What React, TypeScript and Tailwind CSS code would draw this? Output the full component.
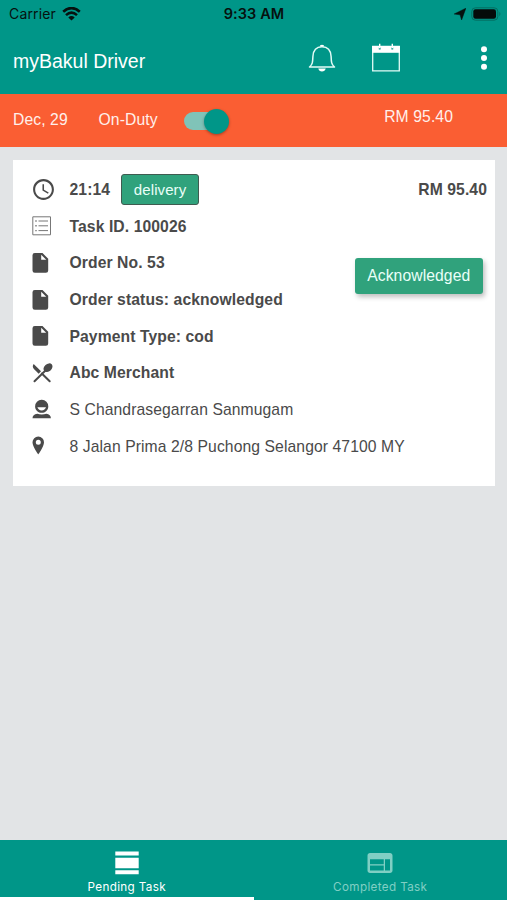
import type { ReactNode } from "react";
import { MdAccessTime, MdWeb } from "react-icons/md";

interface TaskRowProps {
  icon: ReactNode;
  children: ReactNode;
  light?: boolean;
}

const TaskRow = ({ icon, children, light }: TaskRowProps) => (
  <div className="flex h-[36.65px] items-center">
    <div className="flex w-[38px] shrink-0 items-center">{icon}</div>
    <div className={light ? "flex items-center whitespace-nowrap" : "flex items-center whitespace-nowrap font-bold"}>
      {children}
    </div>
  </div>
);

const WifiIcon = () => (
  <svg className="ml-[6px] h-[14px] w-[19px]" viewBox="0 0 19 14" fill="none" stroke="#06110f" strokeWidth="2.6">
    <path d="M1.2 4.7Q9.5 -2.6 17.8 4.7" />
    <path d="M4 8.1Q9.5 3.2 15 8.1" />
    <path d="M6.3 10.4Q9.5 7.8 12.7 10.4L9.5 13.5Z" fill="#06110f" stroke="none" />
  </svg>
);

const BellIcon = () => (
  <svg className="h-[28px] w-[28px]" viewBox="0 0 28 28" fill="none">
    <path d="M1.5 23C4.6 20.400 4.700 18 4.900 12.500C5.200 6.500 8 2.700 14 2.700S22.800 6.500 23.100 12.500C23.300 18 23.400 20.400 26.500 23Z" stroke="#e2fbf6" strokeWidth="1.5" strokeLinejoin="round" />
    <path d="M11.7 2.600a2.300 1.800 0 0 1 4.600 0Z" fill="white" />
    <path d="M10.300 24.600h7.400c-.4 2-1.800 3-3.700 3s-3.300-1-3.700-3Z" fill="white" />
  </svg>
);

const CalendarIcon = () => (
  <svg className="h-[29px] w-[30px]" viewBox="0 0 30 29" fill="none">
    <path d="M1.7 3.500h26.600v24.300H1.700Z" stroke="#e2fbf6" strokeWidth="1.300" />
    <path d="M1.1 3h27.800v6.800H1.100Z" fill="white" />
    <path d="M8.700 4.500v2M21.300 4.500v2" stroke="#009688" strokeWidth="1.800" />
    <path d="M8.700.7v4.500M21.300.7v4.500" stroke="white" strokeWidth="1.400" />
  </svg>
);

const ListIcon = () => (
  <svg className="h-[20px] w-[20px]" viewBox="0 0 20 20" fill="none" stroke="#777">
    <path d="M.8.800h17.700v18H.8Z" />
    <path d="M6.500 5h9.500M6.500 9.800h9.500M6.500 14.600h9.500" />
    <path d="M3.300 5h1.400M3.300 9.800h1.400M3.300 14.600h1.400" strokeWidth="1.400" />
  </svg>
);

const DocumentIcon = () => (
  <svg className="h-[20px] w-[17px]" viewBox="0 0 17 20">
    <path d="M2.800 0h7.700L16.200 5.800v11.700a2.300 2.300 0 0 1-2.300 2.300H2.800A2.300 2.300 0 0 1 .5 17.500V2.300A2.300 2.300 0 0 1 2.800 0Z" fill="#4a4a4a" />
    <path d="M9.200 1.800v5h5Z" fill="white" />
  </svg>
);

const CutleryIcon = () => (
  <svg className="h-[20px] w-[21px]" viewBox="0 0 21 20">
    <path d="M2.500 18.300 14 7M17.700 18.300 9.800 10.500" stroke="#4a4a4a" strokeWidth="2" strokeLinecap="round" />
    <path d="M1.700 1 9 8.300 6.700 10.700 2.200 6.300C.4 4.500.4 2.700 1.700 1Z" fill="#4a4a4a" />
    <ellipse cx="16" cy="4.700" rx="5" ry="3.700" transform="rotate(-42 16 4.700)" fill="#4a4a4a" />
  </svg>
);

const PersonIcon = () => (
  <svg className="-mt-px h-[20px] w-[19px]" viewBox="0 0 19 20" fill="#4a4a4a">
    <path fillRule="evenodd" d="M9.700.8a6.500 6.400 0 0 1 6.600 6.600c0 3.500-3 6.400-6.600 6.400S3.100 10.900 3.100 7.400A6.500 6.400 0 0 1 9.700.8ZM5.400 8.300c.6 1.900 2.200 3.200 4.300 3.200s3.700-1.300 4.300-3.200Z" />
    <path d="M.5 19.300c.1-2.700 1.600-4 4.800-4.600 2.400 1.100 6.500 1.100 8.900 0 3.200.6 4.600 1.900 4.700 4.600Z" />
  </svg>
);

const PinIcon = () => (
  <svg className="-mt-px h-[19px] w-[13px]" viewBox="0 0 13 19">
    <path fillRule="evenodd" d="M6.300.5A5.800 5.800 0 0 0 .5 6.300C.5 10.500 6.300 18.500 6.300 18.500S12 10.500 12 6.300A5.800 5.800 0 0 0 6.300.5Zm0 3.200a2.500 2.500 0 1 1 0 5 2.500 2.500 0 0 1 0-5Z" fill="#4a4a4a" />
  </svg>
);

const StatusBar = () => (
  <div className="grid h-[27px] grid-cols-3 items-center pl-[9px] pr-[6px] font-['Inter',sans-serif] text-[#06110f]">
    <div className="flex items-center">
      <span className="text-[14px] tracking-[0.15px]">Carrier</span>
      <WifiIcon />
    </div>
    <span className="-ml-[2px] text-center text-[14.5px] font-semibold tracking-[0.1px]">9:33 AM</span>
    <div className="flex items-center justify-end gap-[5px]">
      <svg className="h-[12px] w-[12px]" viewBox="0 0 12 12">
        <path d="M11.900.2 7.600 11.900 6.100 6.800.2 6Z" fill="#06110f" stroke="#06110f" strokeWidth=".5" />
      </svg>
      <svg className="h-[14px] w-[30px]" viewBox="0 0 30 14">
        <rect x=".8" y=".8" width="26" height="12.400" rx="3.600" fill="none" stroke="#046e62" />
        <rect x="2.300" y="2.300" width="22.700" height="9.400" rx="2.200" fill="#050b0a" />
        <path d="M28.400 4.800q2 2.200 0 4.400Z" fill="#046e62" />
      </svg>
    </div>
  </div>
);

const Header = () => (
  <header className="h-[94px] bg-[#009688]">
    <StatusBar />
    <div className="flex h-[67px] items-start justify-between pl-[13px] pr-[19px] text-white">
      <h1 className="pt-[21px] text-[19.5px] leading-[27px]">myBakul Driver</h1>
      <div className="flex items-center pt-[16px]">
        <BellIcon />
        <div className="ml-[35px]">
          <CalendarIcon />
        </div>
        <svg className="ml-[79px] h-[26px] w-[8px]" viewBox="0 0 8 26" fill="white">
          <circle cx="4" cy="4.300" r="3" />
          <circle cx="4" cy="13" r="3" />
          <circle cx="4" cy="21.700" r="3" />
        </svg>
      </div>
    </div>
  </header>
);

const DutyBar = () => (
  <div className="flex h-[53px] items-start bg-[#fa5e33] pl-[13px] pr-[54px] pt-[13px] text-[15.7px] leading-[24px] text-[#fff0eb]">
    <span className="mt-px w-[85.5px] tracking-[0.1px]">Dec, 29</span>
    <span className="mt-px w-[85.5px] tracking-[0.1px]">On-Duty</span>
    <div className="mt-[5px] flex h-[18px] w-[43px] items-center justify-end rounded-full bg-[#80c3b8]">
      <div className="-mr-[2px] h-[25px] w-[25px] shrink-0 rounded-full bg-[#009688] shadow-[0_1px_3px_rgba(0,0,0,0.35)]" />
    </div>
    <span className="-mt-[2px] ml-auto tracking-[0.1px]">RM 95.40</span>
  </div>
);

const TaskCard = () => (
  <section className="relative mx-[13px] mr-[12px] mt-[13px] h-[326px] bg-white pl-[18.5px] pt-[11.5px] text-[15.7px] tracking-[0.09px] text-[#4a4a4a]">
    <div className="flex items-center justify-between pr-[8px]">
      <TaskRow icon={<MdAccessTime className="-ml-px -mt-px h-[25px] w-[25px]" />}>
        <span>21:14</span>
        <span className="ml-[11px] flex h-[31px] w-[78px] items-center justify-center rounded-[3px] border border-[#3f5b50] bg-[#30a27c] text-[15px] font-normal text-[#e9fff8]">
          delivery
        </span>
      </TaskRow>
      <span className="font-bold">RM 95.40</span>
    </div>
    <TaskRow icon={<ListIcon />}>Task ID. 100026</TaskRow>
    <TaskRow icon={<DocumentIcon />}>Order No. 53</TaskRow>
    <TaskRow icon={<DocumentIcon />}>Order status: acknowledged</TaskRow>
    <TaskRow icon={<DocumentIcon />}>Payment Type: cod</TaskRow>
    <TaskRow icon={<CutleryIcon />}>Abc Merchant</TaskRow>
    <TaskRow icon={<PersonIcon />} light>S Chandrasegarran Sanmugam</TaskRow>
    <TaskRow icon={<PinIcon />} light>8 Jalan Prima 2/8 Puchong Selangor 47100 MY</TaskRow>
    <button className="absolute right-[12px] top-[98px] h-[35.5px] w-[128.5px] rounded-[3px] bg-[#30a27c] text-[#e9fff8] shadow-[2px_3px_5px_rgba(0,0,0,0.25)]">
      Acknowledged
    </button>
  </section>
);

const TabBar = () => (
  <nav className="mt-auto flex h-[60px] flex-col bg-[#009688] font-['Inter',sans-serif] text-[11.7px] tracking-[0.35px]">
    <div className="flex h-[57px] text-white">
      <div className="flex flex-1 flex-col items-center pt-[11px]">
        <svg className="h-[24px] w-[24px]" viewBox="0 0 24 24" fill="white">
          <path d="M.3.500h23.400v4H.3ZM.3 6.800h23.400v10.400H.3ZM.3 19.300h23.400v4H.3Z" />
        </svg>
        <span className="mt-[3px] leading-[18px]">Pending Task</span>
      </div>
      <div className="flex flex-1 flex-col items-center pt-[8px] text-[#80cfc4]">
        <MdWeb className="h-[30px] w-[30px]" />
        <span className="leading-[18px]">Completed Task</span>
      </div>
    </div>
    <div className="mt-auto h-[3px] w-1/2 bg-white" />
  </nav>
);

const App = () => (
  <div className="flex h-[900px] w-[507px] flex-col overflow-hidden bg-[#e2e4e6] font-['Liberation_Sans',Arial,sans-serif]">
    <Header />
    <DutyBar />
    <TaskCard />
    <TabBar />
  </div>
);

export default App;
